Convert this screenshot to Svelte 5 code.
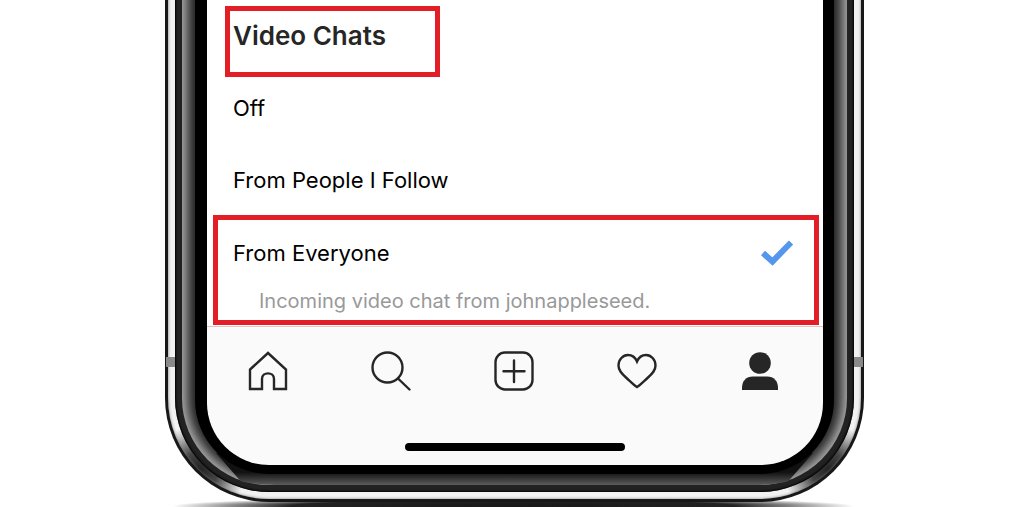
<script>
  const options = [
    { id: 'off', label: 'Off' },
    { id: 'following', label: 'From People I Follow' },
    { id: 'everyone', label: 'From Everyone', note: 'Incoming video chat from johnappleseed.' }
  ];
  const tabs = ['Home', 'Search', 'New post', 'Activity', 'Profile'];
  let selected = $state('everyone');
</script>

<main class="stage">
  <div class="phone">
    <div class="steel">
      <div class="seam">
        <div class="band">
          <div class="bezel">
            <div class="screen">
              <fieldset class="settings">
                <legend class="title marked">Video Chats</legend>
                {#each options as option (option.id)}
                  <div class="option" class:marked={option.note}>
                    <label class="row">
                      <span>{option.label}</span>
                      <input type="radio" name="video-chats" value={option.id} bind:group={selected} />
                      {#if selected === option.id}
                        <svg class="check" viewBox="0 0 34 28" aria-hidden="true">
                          <path d="M3 14L12.500 22.500L31 3.500" />
                        </svg>
                      {/if}
                    </label>
                    {#if option.note}
                      <p class="note">{option.note}</p>
                    {/if}
                  </div>
                {/each}
              </fieldset>
              <nav class="tabs">
                {#each tabs as tab, i (tab)}
                  <button type="button" aria-label={tab}>
                    <svg viewBox="0 0 40 40" aria-hidden="true">
                      {#if i === 0}
                        <path d="M2 38V18.500L20 2L38 18.500V38H26V28C26 20.500 14 20.500 14 28V38Z" />
                      {:else if i === 1}
                        <circle cx="16.500" cy="16.500" r="15" />
                        <path d="M27 27.500L38.500 38.500" />
                      {:else if i === 2}
                        <rect x="1.500" y="1.500" width="37" height="37" rx="9.500" />
                        <path d="M20 9.500V31M9.500 20.300H30.500" />
                      {:else if i === 3}
                        <path d="M20 36C17.500 34.500 14 31 9 26.500C4.500 22.500 1.500 19.500 1.500 14.500C1.500 8.500 6 4 11 4C15.500 4 18.300 6.500 20 10.500C21.700 6.500 24.500 4 29 4C34 4 38.500 8.500 38.500 14.500C38.500 19.500 35.500 22.500 31 26.500C26 31 22.500 34.500 20 36Z" />
                      {:else}
                        <circle class="solid" cx="20" cy="12" r="10.800" />
                        <path class="solid" d="M2 39V37C2 30 6 25.500 13 25.500H27C34 25.500 38 30 38 37V39Z" />
                      {/if}
                    </svg>
                  </button>
                {/each}
              </nav>
              <div class="indicator"></div>
            </div>
          </div>
        </div>
      </div>
    </div>
  </div>
</main>

<style>
  :global(body) {
    background: #fff;
    overflow: hidden;
  }
  .stage {
    position: relative;
    padding: 0 160px 5px 165px;
    font-family: Inter, 'Liberation Sans', sans-serif;
    color: #000;
  }
  .stage::before {
    content: '';
    position: absolute;
    left: 172px;
    right: 170px;
    bottom: -8px;
    height: 18px;
    background: radial-gradient(closest-side, #181818 0, #222 65%, #888 82%, transparent);
  }
  .phone {
    position: relative;
    padding: 0 3px 3px;
    border-radius: 0 0 104px 104px;
    background: #181818;
  }
  .phone::before,
  .phone::after {
    content: '';
    position: absolute;
    top: 381px;
    z-index: 1;
    width: 9px;
    height: 10px;
    background: #8a8a8a;
  }
  .phone::before {
    left: 1px;
  }
  .phone::after {
    right: 1px;
  }
  .steel {
    padding: 0 7px 7px;
    border-radius: 0 0 101px 101px;
    background:
      radial-gradient(circle at 32px calc(100% - 29px), #222 0, #444 18px, transparent 46px),
      radial-gradient(circle at calc(100% - 32px) calc(100% - 29px), #222 0, #444 18px, transparent 46px),
      #f2f2f2;
    box-shadow: inset 0 0 3px #777;
  }
  .seam {
    padding: 0 7px 7px;
    border-radius: 0 0 94px 94px;
    background: #222;
    box-shadow: inset 0 0 2px 1px #000;
  }
  .band {
    position: relative;
    margin-top: -24px;
    padding: 24px 13px 11px;
    border-radius: 0 0 87px 87px;
    background: #222;
    box-shadow: inset 0 0 12px 5px #b4b4b4;
  }
  .band::before {
    content: '';
    position: absolute;
    left: 34px;
    right: 34px;
    bottom: 0;
    height: 32px;
    border-radius: 0 0 60px 60px / 0 0 20px 20px;
    background: linear-gradient(#111 60%, #5c5c5c);
    clip-path: polygon(0 0, 100% 0, calc(100% - 28px) 100%, 28px 100%);
  }
  .bezel {
    position: relative;
    padding: 0 11px 9px 12px;
    border-radius: 0 0 74px 74px;
    background: #000;
  }
  .screen {
    overflow: hidden;
    border-radius: 0 0 62px 62px;
    background: #fafafa;
  }
  .settings {
    margin: 0;
    padding: 6px 4px 1px 6px;
    border: 0;
    border-bottom: 1px solid #d8c8c8;
    background: #fff;
    min-width: 0;
  }
  .title {
    float: left;
    width: 215px;
    height: 71px;
    margin: 0 0 -5px 12px;
    padding: 9px 3px;
    box-sizing: border-box;
    font-size: 26px;
    line-height: 32px;
    font-weight: 600;
    color: #262626;
  }
  .title + .option {
    clear: both;
  }
  .marked {
    border: 5px solid #e31e26;
  }
  .option {
    padding: 0 20px;
  }
  .option.marked {
    margin-top: -1px;
    padding: 0 15px 6px;
  }
  .row {
    position: relative;
    display: flex;
    align-items: center;
    justify-content: space-between;
    height: 72px;
    font-size: 22px;
    cursor: pointer;
  }
  .row input {
    position: absolute;
    inset: 0;
    margin: 0;
    appearance: none;
    outline: none;
  }
  .option.marked .row {
    height: 66px;
  }
  .check {
    width: 34px;
    height: 28px;
    margin-right: 5px;
    fill: none;
    stroke: #5597ec;
    stroke-width: 6;
  }
  .note {
    margin: 2px 0 0 26px;
    font-size: 20px;
    line-height: 26px;
    color: #999;
  }
  .tabs {
    display: grid;
    grid-template-columns: repeat(5, 1fr);
    padding: 24px 2px 0 0;
  }
  .tabs button {
    display: grid;
    place-items: center;
    padding: 0;
    border: 0;
    background: none;
  }
  .tabs svg {
    width: 40px;
    height: 40px;
    fill: none;
    stroke: #262626;
    stroke-width: 2.400;
    stroke-linecap: round;
  }
  .tabs .solid {
    fill: #262626;
    stroke: none;
  }
  .indicator {
    width: 220px;
    height: 8px;
    margin: 52px auto 14px;
    border-radius: 4px;
    background: #000;
  }
</style>
